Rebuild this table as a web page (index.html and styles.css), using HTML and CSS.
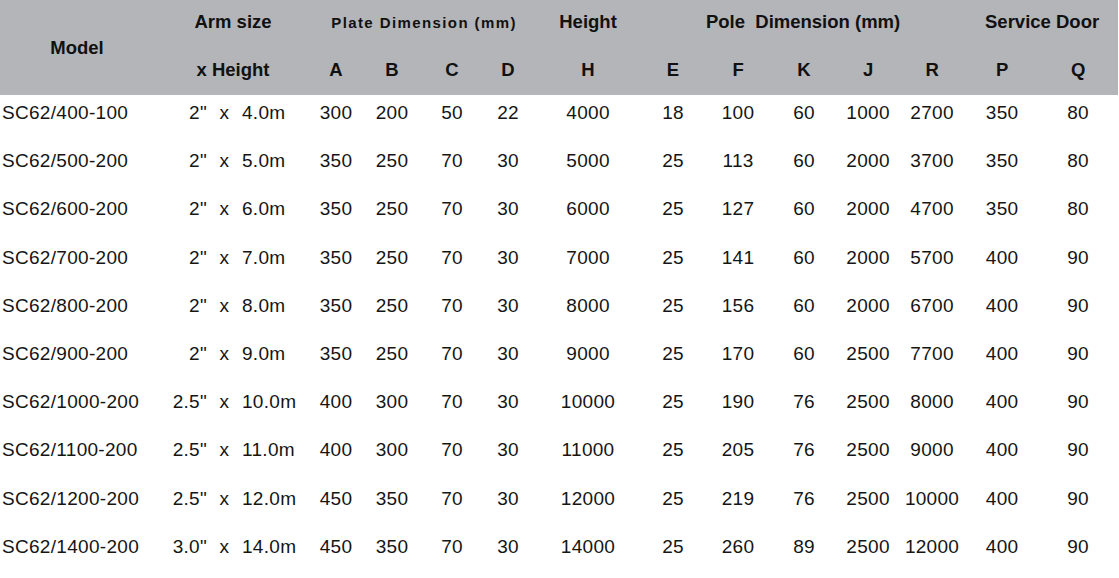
FILE: index.html
```html
<!DOCTYPE html>
<html>
<head>
<meta charset="utf-8">
<link rel="stylesheet" href="styles.css">
</head>
<body>
<table class="spec">
  <colgroup>
    <col class="c-model"><col class="c-arm"><col class="c-a"><col class="c-b"><col class="c-c"><col class="c-d"><col class="c-h"><col class="c-e"><col class="c-f"><col class="c-k"><col class="c-j"><col class="c-r"><col class="c-p"><col class="c-q">
  </colgroup>
  <thead>
    <tr class="h1">
      <th rowspan="2" class="model-h">Model</th>
      <th>Arm size</th>
      <th colspan="4" class="plate">Plate Dimension (mm)</th>
      <th>Height</th>
      <th colspan="5">Pole&nbsp; Dimension (mm)</th>
      <th colspan="2">Service Door</th>
    </tr>
    <tr class="h2">
      <th>x Height</th>
      <th>A</th><th>B</th><th>C</th><th>D</th>
      <th>H</th>
      <th>E</th><th>F</th><th>K</th><th>J</th><th>R</th>
      <th>P</th><th>Q</th>
    </tr>
  </thead>
  <tbody>
    <tr><td class="model">SC62/400-100</td><td><div class="arm"><span class="dia">2"</span><span class="x">x</span><span class="len">4.0m</span></div></td><td>300</td><td>200</td><td>50</td><td>22</td><td>4000</td><td>18</td><td>100</td><td>60</td><td>1000</td><td>2700</td><td>350</td><td>80</td></tr>
    <tr><td class="model">SC62/500-200</td><td><div class="arm"><span class="dia">2"</span><span class="x">x</span><span class="len">5.0m</span></div></td><td>350</td><td>250</td><td>70</td><td>30</td><td>5000</td><td>25</td><td>113</td><td>60</td><td>2000</td><td>3700</td><td>350</td><td>80</td></tr>
    <tr><td class="model">SC62/600-200</td><td><div class="arm"><span class="dia">2"</span><span class="x">x</span><span class="len">6.0m</span></div></td><td>350</td><td>250</td><td>70</td><td>30</td><td>6000</td><td>25</td><td>127</td><td>60</td><td>2000</td><td>4700</td><td>350</td><td>80</td></tr>
    <tr><td class="model">SC62/700-200</td><td><div class="arm"><span class="dia">2"</span><span class="x">x</span><span class="len">7.0m</span></div></td><td>350</td><td>250</td><td>70</td><td>30</td><td>7000</td><td>25</td><td>141</td><td>60</td><td>2000</td><td>5700</td><td>400</td><td>90</td></tr>
    <tr><td class="model">SC62/800-200</td><td><div class="arm"><span class="dia">2"</span><span class="x">x</span><span class="len">8.0m</span></div></td><td>350</td><td>250</td><td>70</td><td>30</td><td>8000</td><td>25</td><td>156</td><td>60</td><td>2000</td><td>6700</td><td>400</td><td>90</td></tr>
    <tr><td class="model">SC62/900-200</td><td><div class="arm"><span class="dia">2"</span><span class="x">x</span><span class="len">9.0m</span></div></td><td>350</td><td>250</td><td>70</td><td>30</td><td>9000</td><td>25</td><td>170</td><td>60</td><td>2500</td><td>7700</td><td>400</td><td>90</td></tr>
    <tr><td class="model">SC62/1000-200</td><td><div class="arm"><span class="dia">2.5"</span><span class="x">x</span><span class="len">10.0m</span></div></td><td>400</td><td>300</td><td>70</td><td>30</td><td>10000</td><td>25</td><td>190</td><td>76</td><td>2500</td><td>8000</td><td>400</td><td>90</td></tr>
    <tr><td class="model">SC62/1100-200</td><td><div class="arm"><span class="dia">2.5"</span><span class="x">x</span><span class="len">11.0m</span></div></td><td>400</td><td>300</td><td>70</td><td>30</td><td>11000</td><td>25</td><td>205</td><td>76</td><td>2500</td><td>9000</td><td>400</td><td>90</td></tr>
    <tr><td class="model">SC62/1200-200</td><td><div class="arm"><span class="dia">2.5"</span><span class="x">x</span><span class="len">12.0m</span></div></td><td>450</td><td>350</td><td>70</td><td>30</td><td>12000</td><td>25</td><td>219</td><td>76</td><td>2500</td><td>10000</td><td>400</td><td>90</td></tr>
    <tr><td class="model">SC62/1400-200</td><td><div class="arm"><span class="dia">3.0"</span><span class="x">x</span><span class="len">14.0m</span></div></td><td>450</td><td>350</td><td>70</td><td>30</td><td>14000</td><td>25</td><td>260</td><td>89</td><td>2500</td><td>12000</td><td>400</td><td>90</td></tr>
  </tbody>
</table>
</body>
</html>
```
FILE: styles.css
```css
html, body {
  margin: 0;
  padding: 0;
  background: #ffffff;
}

body {
  font-family: "Liberation Sans", Arial, sans-serif;
  color: #151515;
  overflow: hidden;
}

.spec {
  border-collapse: collapse;
  border-spacing: 0;
  table-layout: fixed;
  width: 1118px;
}

.c-model { width: 154px; }
.c-arm { width: 158px; }
.c-a { width: 48px; }
.c-b { width: 64px; }
.c-c { width: 56px; }
.c-d { width: 56px; }
.c-h { width: 104px; }
.c-e { width: 66px; }
.c-f { width: 64px; }
.c-k { width: 68px; }
.c-j { width: 60px; }
.c-r { width: 68px; }
.c-p { width: 72px; }
.c-q { width: 80px; }

thead {
  background: #b4b5b9;
}

th {
  padding: 0;
  font-weight: bold;
  font-size: 18.5px;
  color: #111111;
  text-align: center;
  white-space: nowrap;
  vertical-align: middle;
}

.h1 th {
  height: 44px;
}

.h2 th {
  height: 51px;
}

th.plate {
  font-size: 15px;
  letter-spacing: 1.4px;
}

td {
  padding: 3px 0 15.2px 0;
  height: 30px;
  line-height: 30px;
  font-size: 19px;
  letter-spacing: 0.3px;
  text-align: center;
  vertical-align: top;
  white-space: nowrap;
}

td.model {
  text-align: left;
  padding-left: 2px;
}

.arm {
  display: grid;
  grid-template-columns: 53px 35px 1fr;
}

.arm .dia {
  text-align: right;
}

.arm .x {
  text-align: center;
}

.arm .len {
  text-align: left;
}
```
